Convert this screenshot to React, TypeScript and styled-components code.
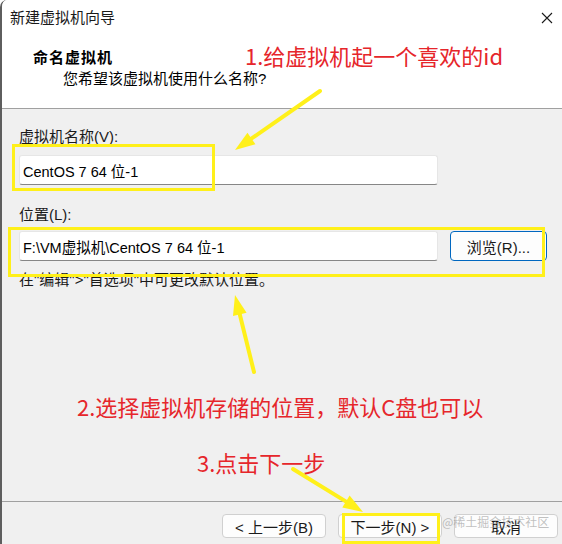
import React from "react";
import styled, { createGlobalStyle } from "styled-components";

const GlobalStyle = createGlobalStyle`
  html, body { margin: 0; padding: 0; background: #ffffff; }
  body { font-family: "Liberation Sans", "Noto Sans CJK SC", sans-serif; }
`;

const Page = styled.div`
  position: relative;
  width: 562px;
  height: 544px;
  overflow: hidden;
`;

const Window = styled.div`
  width: 562px;
  height: 544px;
  box-sizing: border-box;
  border-left: 2px solid #5e5e5e;
  border-top-left-radius: 7px;
  display: flex;
  flex-direction: column;
  background: #f0f0f0;
  font-size: 15px;
  color: #000;
  overflow: hidden;
`;

const TitleBar = styled.div`
  height: 36px;
  flex: none;
  display: flex;
  align-items: center;
  justify-content: space-between;
  padding: 0 9px 1px 8px;
  box-sizing: border-box;
  background: #ffffff;
`;

const Title = styled.span`
  font-size: 15px;
  line-height: 20px;
  color: #1a1a1a;
`;

const Header = styled.div`
  height: 73px;
  flex: none;
  background: #ffffff;
  border-bottom: 1px solid #a0a0a0;
  padding: 11px 0 0 31px;
  box-sizing: border-box;
  display: flex;
  flex-direction: column;
`;

const Heading = styled.div`
  font-family: "Noto Sans CJK SC", sans-serif;
  font-weight: 700;
  font-size: 15px;
  letter-spacing: 1px;
  line-height: 20px;
`;

const Subtitle = styled.div`
  margin: 2px 0 0 30px;
  line-height: 20px;
`;

const Body = styled.div`
  flex: 1;
  padding: 18px 0 0 17px;
  display: flex;
  flex-direction: column;
  align-items: flex-start;
`;

const Label = styled.div<{ $gap: number }>`
  margin-top: ${(p) => p.$gap}px;
  line-height: 20px;
  color: #1a1a1a;
`;

const Field = styled.div<{ $gap: number }>`
  margin-top: ${(p) => p.$gap}px;
  display: flex;
  align-items: center;
  gap: 12px;
`;

const TextBox = styled.div`
  width: 419px;
  height: 30px;
  box-sizing: border-box;
  background: #ffffff;
  border: 1px solid #e6e6e6;
  border-bottom: 1px solid #868686;
  border-radius: 3px;
  padding: 0 0 0 3px;
  display: flex;
  align-items: center;
  font-size: 14.5px;
  color: #000;
`;

const Button = styled.button<{ $w: number; $h: number; $primary?: boolean }>`
  width: ${(p) => p.$w}px;
  height: ${(p) => p.$h}px;
  box-sizing: border-box;
  background: #fdfdfd;
  border: 1px solid ${(p) => (p.$primary ? "#0067c0" : "#d0d0d0")};
  border-radius: 4px;
  font-family: "Liberation Sans", "Noto Sans CJK SC", sans-serif;
  font-size: 15px;
  color: #1a1a1a;
  padding: 0;
  display: flex;
  align-items: center;
  justify-content: center;
`;

const Hint = styled.div`
  margin-top: 9px;
  line-height: 20px;
  color: #1a1a1a;
`;

const Footer = styled.div`
  height: 43px;
  flex: none;
  border-top: 1px solid #a0a0a0;
  padding: 12px 4px 0 0;
  box-sizing: border-box;
  display: flex;
  justify-content: flex-end;
  align-items: flex-start;
  gap: 12px;
`;

const Overlay = styled.div`
  position: absolute;
  inset: 0;
  pointer-events: none;
`;

const Note = styled.div<{ $x: number; $y: number }>`
  position: absolute;
  left: ${(p) => p.$x}px;
  top: ${(p) => p.$y}px;
  font-family: "Noto Sans CJK SC", sans-serif;
  font-size: 22px;
  line-height: 22px;
  color: #e6262b;
  white-space: nowrap;
`;

const Watermark = styled.div`
  position: absolute;
  left: 442px;
  top: 514px;
  font-family: "Noto Sans CJK SC", sans-serif;
  font-size: 12px;
  line-height: 16px;
  color: rgba(140, 140, 140, 0.55);
  white-space: nowrap;
`;

const Drawing = styled.svg`
  position: absolute;
  left: 0;
  top: 0;
`;

const YELLOW = "#fff01a";

function Arrow({ x1, y1, x2, y2 }: { x1: number; y1: number; x2: number; y2: number }) {
  const dx = x2 - x1;
  const dy = y2 - y1;
  const len = Math.hypot(dx, dy);
  const ux = dx / len;
  const uy = dy / len;
  const head = 20;
  const half = 7;
  const bx = x2 - ux * head;
  const by = y2 - uy * head;
  const px = -uy;
  const py = ux;
  const pts = `${x2},${y2} ${bx + px * half},${by + py * half} ${bx - px * half},${by - py * half}`;
  return (
    <g>
      <line x1={x1} y1={y1} x2={bx + ux * 4} y2={by + uy * 4} stroke={YELLOW} strokeWidth={4} strokeLinecap="round" />
      <polygon points={pts} fill={YELLOW} />
    </g>
  );
}

function CloseIcon() {
  return (
    <svg width="12" height="12" viewBox="0 0 12 12">
      <path d="M1 1 L11 11 M11 1 L1 11" stroke="#1a1a1a" strokeWidth="1.1" fill="none" />
    </svg>
  );
}

export default function App() {
  return (
    <Page>
      <GlobalStyle />
      <Window>
        <TitleBar>
          <Title>新建虚拟机向导</Title>
          <CloseIcon />
        </TitleBar>
        <Header>
          <Heading>命名虚拟机</Heading>
          <Subtitle>您希望该虚拟机使用什么名称?</Subtitle>
        </Header>
        <Body>
          <Label $gap={0}>虚拟机名称(V):</Label>
          <Field $gap={8}>
            <TextBox>CentOS 7 64 位-1</TextBox>
          </Field>
          <Label $gap={20}>位置(L):</Label>
          <Field $gap={6}>
            <TextBox>F:\VM虚拟机\CentOS 7 64 位-1</TextBox>
            <Button $w={97} $h={30} $primary>浏览(R)...</Button>
          </Field>
          <Hint>在"编辑"&gt;"首选项"中可更改默认位置。</Hint>
        </Body>
        <Footer>
          <Button $w={104} $h={24}>&lt; 上一步(B)</Button>
          <Button $w={104} $h={24}>下一步(N) &gt;</Button>
          <Button $w={104} $h={24}>取消</Button>
        </Footer>
      </Window>
      <Overlay>
        <Drawing width={562} height={544} viewBox="0 0 562 544">
          <rect x={13.5} y={145.5} width={200} height={44} fill="none" stroke={YELLOW} strokeWidth={3} />
          <rect x={9.5} y={228.5} width={534} height={47} fill="none" stroke={YELLOW} strokeWidth={3} />
          <rect x={343.5} y={514.5} width={95} height={28} fill="none" stroke={YELLOW} strokeWidth={3} />
          <Arrow x1={320} y1={91} x2={235} y2={150} />
          <Arrow x1={254} y1={372} x2={235} y2={295} />
          <Arrow x1={293} y1={469} x2={363} y2={512} />
        </Drawing>
        <Note $x={245} $y={44}>1.给虚拟机起一个喜欢的id</Note>
        <Note $x={77} $y={395}>2.选择虚拟机存储的位置，默认C盘也可以</Note>
        <Note $x={197} $y={451}>3.点击下一步</Note>
        <Watermark>@稀土掘金技术社区</Watermark>
      </Overlay>
    </Page>
  );
}
